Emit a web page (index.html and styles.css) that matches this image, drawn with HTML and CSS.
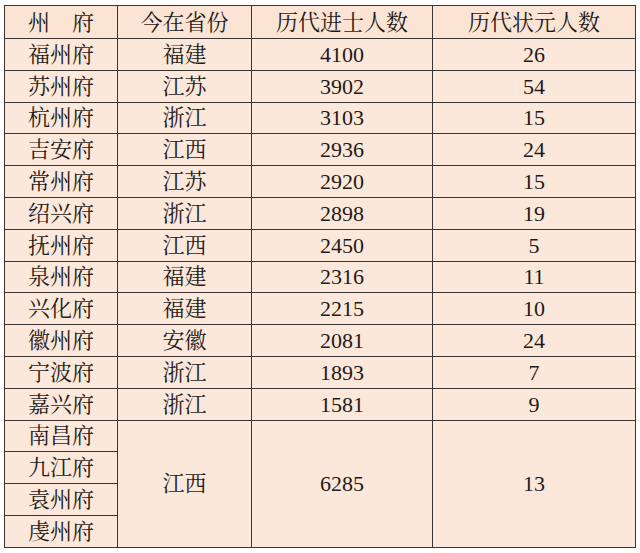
FILE: index.html
```html
<!DOCTYPE html>
<html lang="zh">
<head>
<meta charset="utf-8">
<title>州府进士状元统计</title>
<link rel="stylesheet" href="styles.css">
</head>
<body>
<table class="stats">
  <colgroup>
    <col class="c1"><col class="c2"><col class="c3"><col class="c4">
  </colgroup>
  <thead>
    <tr class="head"><th>州&emsp;府</th><th>今在省份</th><th>历代进士人数</th><th>历代状元人数</th></tr>
  </thead>
  <tbody>
    <tr><td>福州府</td><td>福建</td><td>4100</td><td>26</td></tr>
    <tr><td>苏州府</td><td>江苏</td><td>3902</td><td>54</td></tr>
    <tr><td>杭州府</td><td>浙江</td><td>3103</td><td>15</td></tr>
    <tr><td>吉安府</td><td>江西</td><td>2936</td><td>24</td></tr>
    <tr><td>常州府</td><td>江苏</td><td>2920</td><td>15</td></tr>
    <tr><td>绍兴府</td><td>浙江</td><td>2898</td><td>19</td></tr>
    <tr><td>抚州府</td><td>江西</td><td>2450</td><td>5</td></tr>
    <tr><td>泉州府</td><td>福建</td><td>2316</td><td>11</td></tr>
    <tr><td>兴化府</td><td>福建</td><td>2215</td><td>10</td></tr>
    <tr><td>徽州府</td><td>安徽</td><td>2081</td><td>24</td></tr>
    <tr><td>宁波府</td><td>浙江</td><td>1893</td><td>7</td></tr>
    <tr><td>嘉兴府</td><td>浙江</td><td>1581</td><td>9</td></tr>
    <tr><td>南昌府</td><td rowspan="4">江西</td><td rowspan="4">6285</td><td rowspan="4">13</td></tr>
    <tr><td>九江府</td></tr>
    <tr><td>袁州府</td></tr>
    <tr><td>虔州府</td></tr>
  </tbody>
</table>
</body>
</html>
```

FILE: styles.css
```css
html, body {
  margin: 0;
  padding: 0;
  background: #ffffff;
}
body {
  padding: 5px 0 0 4px;
}
.stats {
  border-collapse: collapse;
  table-layout: fixed;
  width: 631px;
  background: #fce8da;
  font-family: "Liberation Serif", "Noto Serif CJK SC", "Noto Sans CJK SC", serif;
  font-size: 22px;
  color: #1e1a18;
}
.c1 { width: 113px; }
.c2 { width: 134px; }
.c3 { width: 181px; }
.c4 { width: 203px; }
.stats th,
.stats td {
  border: 1.5px solid #3a3433;
  padding: 0;
  text-align: center;
  vertical-align: middle;
  line-height: 1;
  font-weight: normal;
}
.stats tbody td {
  height: 29.8px;
  padding-top: 1px;
}
.stats .head th {
  height: 31px;
  padding-top: 1px;
  background: #fbe4d4;
}
```
